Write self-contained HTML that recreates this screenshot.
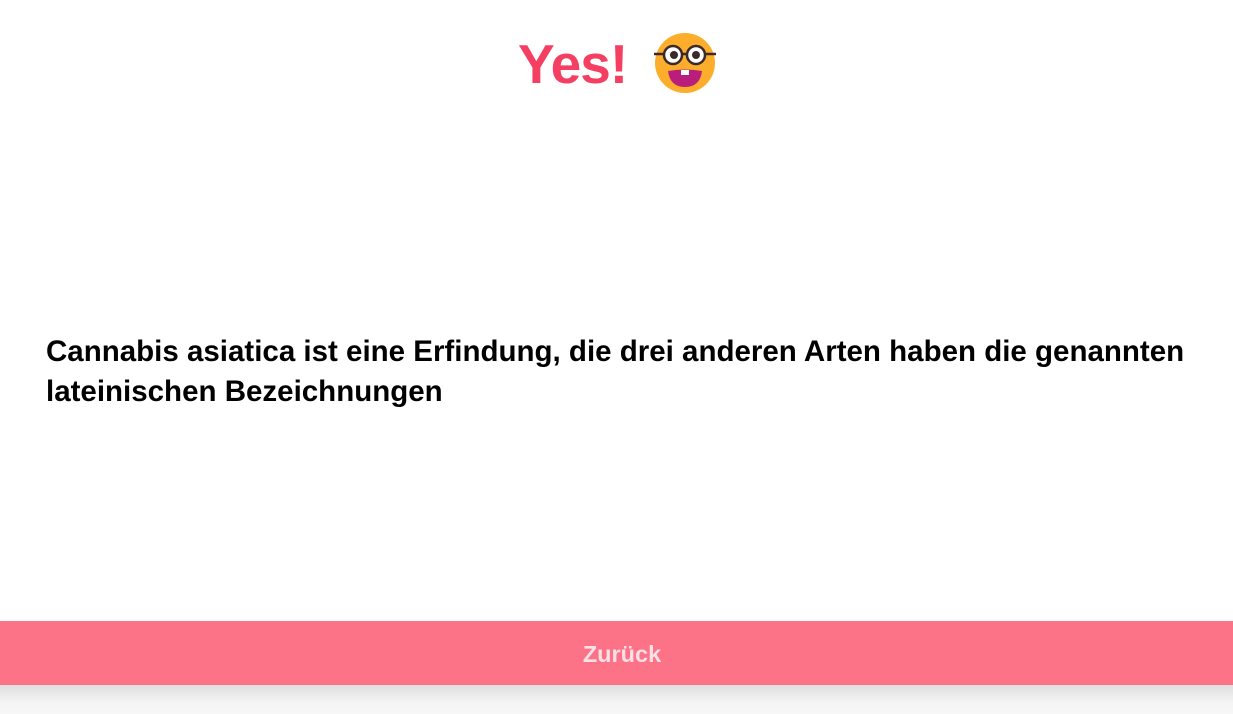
<!DOCTYPE html>
<html><head><meta charset="utf-8"><style>
html,body{margin:0;padding:0;width:1233px;height:714px;background:#fff;overflow:hidden;font-family:"Liberation Sans",sans-serif;}
.title{position:absolute;left:518px;top:29px;font-size:55px;font-weight:bold;color:#f43f63;letter-spacing:-1px;line-height:70px;}
.emoji{position:absolute;left:652px;top:31px;}
.txt{position:absolute;left:46px;top:332px;font-size:29.5px;font-weight:bold;color:#000;line-height:40px;white-space:nowrap;}
.btn{position:absolute;left:0;top:621px;width:1233px;height:64px;background:#fc7287;color:#fde0e6;font-weight:bold;font-size:23.5px;text-align:center;line-height:66px;padding-left:11px;box-sizing:border-box;}
.sh{position:absolute;left:0;top:685px;width:1233px;height:29px;background:linear-gradient(#dedede,#f4f4f4 60%,#f7f7f7);}
</style></head><body>
<div class="title">Yes!</div>
<svg class="emoji" width="66" height="64" viewBox="0 0 66 64">
<circle cx="33" cy="32" r="30" fill="#fdad2c"/>
<path d="M16 40 Q33 37 50 40 Q48 56 33 56 Q18 56 16 40Z" fill="#b91e7c"/>
<rect x="29" y="39" width="8" height="5" fill="#fff"/>
<line x1="2" y1="23" x2="64" y2="23" stroke="#3a2a2a" stroke-width="2.5"/>
<circle cx="21" cy="24" r="9" fill="#fff" stroke="#3a2a2a" stroke-width="2.5"/>
<circle cx="44" cy="24" r="9" fill="#fff" stroke="#3a2a2a" stroke-width="2.5"/>
<circle cx="22" cy="24" r="4" fill="#3a2a2a"/>
<circle cx="44" cy="24" r="4" fill="#3a2a2a"/>
</svg>
<div class="txt">Cannabis asiatica ist eine Erfindung, die drei anderen Arten haben die genannten<br>lateinischen Bezeichnungen</div>
<div class="btn">Zurück</div>
<div class="sh"></div>
</body></html>
